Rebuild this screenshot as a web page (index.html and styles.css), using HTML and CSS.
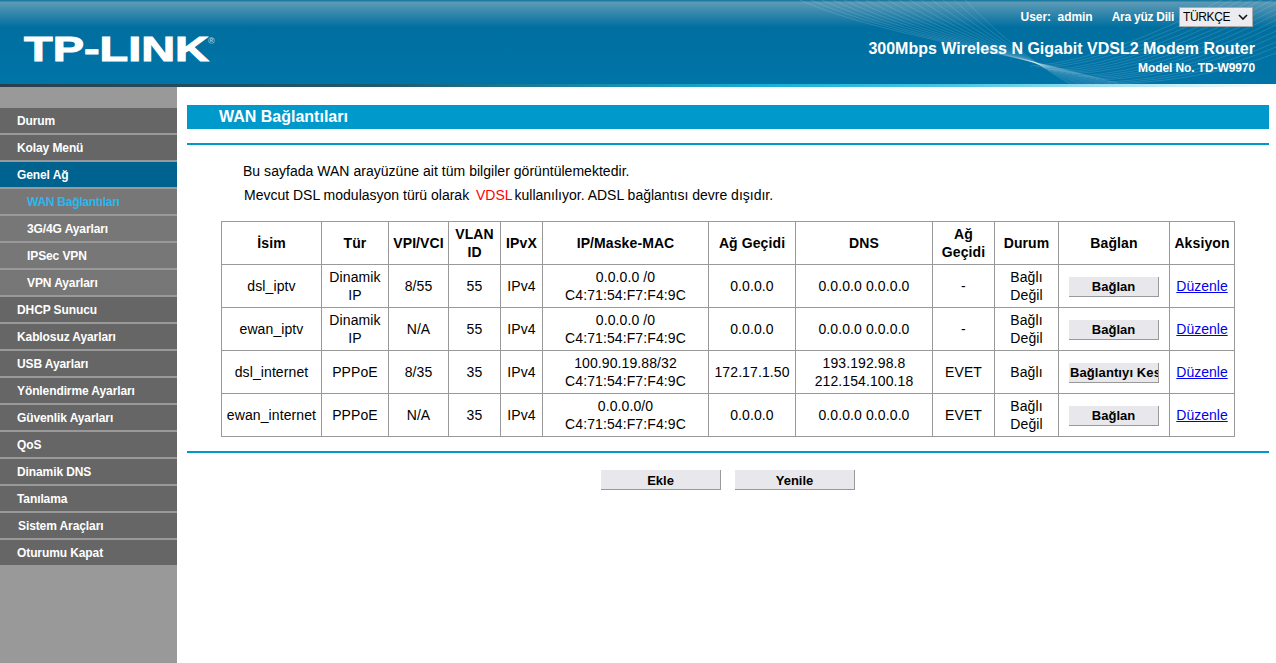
FILE: index.html
```html
<!DOCTYPE html>
<html lang="tr">
<head>
<meta charset="utf-8">
<title>TP-LINK TD-W9970</title>
<link rel="stylesheet" href="styles.css">
</head>
<body>
<header class="top">
  <svg class="waves" viewBox="0 0 496 84" width="496" height="84" aria-hidden="true">
    <path class="wave" d="M20 0C100 35 200 45 340 84M31 0C107 34 203 46 337 84M42 0C115 34 205 46 333 84M53 0C122 33 208 47 330 84M64 0C129 32 211 48 327 84M75 0C137 32 213 48 323 84M86 0C144 31 216 49 320 84M97 0C151 30 219 50 317 84M108 0C159 30 221 50 313 84M119 0C166 29 224 51 310 84M130 0C173 28 227 52 307 84M141 0C181 28 229 52 303 84M152 0C188 27 232 53 300 84M163 0C195 26 235 54 297 84M174 0C203 26 237 54 293 84M185 0C210 25 240 55 290 84"/>
    <path class="wave" d="M250 66Q340 61 496 -30M256 67Q346 62 496 -24M262 68Q352 63 496 -19M268 70Q358 65 496 -13M274 71Q364 66 496 -8M280 72Q370 67 496 -2M286 73Q376 68 496 3M292 74Q382 69 496 9M298 76Q388 71 496 14M304 77Q394 72 496 20M310 78Q400 73 496 25M316 79Q406 74 496 31M322 80Q412 75 496 36M328 82Q418 77 496 42M334 83Q424 78 496 47M340 84Q430 79 496 53"/>
  </svg>
  <svg class="logo" viewBox="0 0 200 34" width="200" height="34" role="img" aria-label="TP-LINK">
    <text class="logo-word" x="0" y="28" textLength="185" lengthAdjust="spacingAndGlyphs">TP-LINK</text>
    <text class="logo-reg" x="184" y="11">®</text>
  </svg>
  <div class="top-right">
    <div class="top-user">
      <span class="user">User:&nbsp; admin</span>
      <span class="lang-label">Ara yüz Dili</span>
      <span class="lang-wrap">
        <select class="lang"><option>TÜRKÇE</option></select>
        <svg class="chev" viewBox="0 0 10 6" width="10" height="6" aria-hidden="true"><path d="M1 1l4 4 4-4"/></svg>
      </span>
    </div>
    <div class="product">300Mbps Wireless N Gigabit VDSL2 Modem Router</div>
    <div class="model">Model No. TD-W9970</div>
  </div>
</header>
<div class="stripe"></div>
<div class="layout">
  <nav class="side">
    <a class="item">Durum</a>
    <a class="item">Kolay Menü</a>
    <a class="item active">Genel Ağ</a>
    <a class="item sub current">WAN Bağlantıları</a>
    <a class="item sub">3G/4G Ayarları</a>
    <a class="item sub">IPSec VPN</a>
    <a class="item sub">VPN Ayarları</a>
    <a class="item">DHCP Sunucu</a>
    <a class="item">Kablosuz Ayarları</a>
    <a class="item">USB Ayarları</a>
    <a class="item">Yönlendirme Ayarları</a>
    <a class="item">Güvenlik Ayarları</a>
    <a class="item">QoS</a>
    <a class="item">Dinamik DNS</a>
    <a class="item">Tanılama</a>
    <a class="item nudge">Sistem Araçları</a>
    <a class="item">Oturumu Kapat</a>
  </nav>
  <main class="main">
    <h1 class="title">WAN Bağlantıları</h1>
    <div class="rule"></div>
    <p class="intro">Bu sayfada WAN arayüzüne ait tüm bilgiler görüntülemektedir.</p>
    <p class="intro second">Mevcut DSL modulasyon türü olarak <span class="red">VDSL</span> kullanılıyor. ADSL bağlantısı devre dışıdır.</p>
    <table class="wan">
      <colgroup>
        <col class="c1"><col class="c2"><col class="c3"><col class="c4"><col class="c5"><col class="c6"><col class="c7"><col class="c8"><col class="c9"><col class="c10"><col class="c11"><col class="c12">
      </colgroup>
      <thead>
        <tr><th>İsim</th><th>Tür</th><th>VPI/VCI</th><th>VLAN ID</th><th>IPvX</th><th>IP/Maske-MAC</th><th>Ağ Geçidi</th><th>DNS</th><th>Ağ Geçidi</th><th>Durum</th><th>Bağlan</th><th>Aksiyon</th></tr>
      </thead>
      <tbody>
        <tr><td>dsl_iptv</td><td>Dinamik IP</td><td>8/55</td><td>55</td><td>IPv4</td><td>0.0.0.0 /0<br>C4:71:54:F7:F4:9C</td><td>0.0.0.0</td><td>0.0.0.0 0.0.0.0</td><td>-</td><td>Bağlı Değil</td><td><button class="btn small">Bağlan</button></td><td><a class="edit" href="#">Düzenle</a></td></tr>
        <tr><td>ewan_iptv</td><td>Dinamik IP</td><td>N/A</td><td>55</td><td>IPv4</td><td>0.0.0.0 /0<br>C4:71:54:F7:F4:9C</td><td>0.0.0.0</td><td>0.0.0.0 0.0.0.0</td><td>-</td><td>Bağlı Değil</td><td><button class="btn small">Bağlan</button></td><td><a class="edit" href="#">Düzenle</a></td></tr>
        <tr><td>dsl_internet</td><td>PPPoE</td><td>8/35</td><td>35</td><td>IPv4</td><td>100.90.19.88/32<br>C4:71:54:F7:F4:9C</td><td>172.17.1.50</td><td>193.192.98.8<br>212.154.100.18</td><td>EVET</td><td>Bağlı</td><td><button class="btn small clip">Bağlantıyı Kes</button></td><td><a class="edit" href="#">Düzenle</a></td></tr>
        <tr><td>ewan_internet</td><td>PPPoE</td><td>N/A</td><td>35</td><td>IPv4</td><td>0.0.0.0/0<br>C4:71:54:F7:F4:9C</td><td>0.0.0.0</td><td>0.0.0.0 0.0.0.0</td><td>EVET</td><td>Bağlı Değil</td><td><button class="btn small">Bağlan</button></td><td><a class="edit" href="#">Düzenle</a></td></tr>
      </tbody>
    </table>
    <div class="rule lower"></div>
    <div class="actions">
      <button class="btn wide">Ekle</button>
      <button class="btn wide">Yenile</button>
    </div>
  </main>
</div>
</body>
</html>
```

FILE: styles.css
```css
* { box-sizing: border-box; }
html, body { margin: 0; height: 100%; overflow: hidden; }
body { font-family: "Liberation Sans", Arial, sans-serif; font-size: 14px; color: #000; background: #fff; }

.top {
  position: relative;
  height: 84px;
  display: flex;
  justify-content: space-between;
  color: #fff;
  background: linear-gradient(to bottom, #1c7ba3 0, #1c7ba3 1px, #5d9ab6 2px, #006f9f 27px, #0074a8 84px);
}
.waves { position: absolute; right: 0; top: 0; }
.wave { fill: none; stroke: #fff; stroke-opacity: .22; stroke-width: .6; }
.logo { position: relative; margin: 33px 0 0 24px; overflow: visible; }
.logo-word { font-family: "Liberation Sans", Arial, sans-serif; font-weight: 700; font-size: 35px; fill: #fff; stroke: #fff; stroke-width: 1; }
.logo-reg { font-family: "Liberation Sans", Arial, sans-serif; font-size: 9px; font-weight: 700; fill: #a5cbdc; }
.top-right { position: relative; display: flex; flex-direction: column; align-items: flex-end; padding: 7px 21px 0 0; font-weight: 700; }
.top-user { display: flex; align-items: center; font-size: 12px; height: 20px; margin-right: 2px; }
.user { letter-spacing: -.05px; }
.lang-label { margin: 0 5px 0 19px; letter-spacing: -.25px; }
.lang-wrap { position: relative; display: block; width: 74px; height: 20px; }
.lang { display: block; width: 74px; height: 20px; font: 400 12px "Liberation Sans", Arial, sans-serif; letter-spacing: -.35px; background: #ecebf0; color: #000; border: 1px solid #aaa; padding: 0 0 0 3px; border-radius: 0; appearance: none; -webkit-appearance: none; }
.chev { position: absolute; right: 5px; top: 7px; pointer-events: none; }
.chev path { fill: none; stroke: #111; stroke-width: 1.6; }
.product { font-size: 16px; line-height: 20px; margin-top: 12px; }
.model { font-size: 12px; line-height: 14px; margin-top: 2px; letter-spacing: -.1px; }

.stripe { height: 3px; background: linear-gradient(to right, #2b3f4b 0, #1f5a6e 30%, #15b0d6 60%, #4cc6e2 75%, #fff 100%); }

.layout { display: flex; height: 576px; }
.side { width: 177px; flex: none; padding-top: 21px; background: #999; display: flex; flex-direction: column; gap: 2px; }
.item { display: block; height: 25px; line-height: 27px; padding-left: 17px; font-size: 12px; font-weight: 700; color: #fff; background: #666; letter-spacing: -.1px; }
.item.nudge { padding-left: 18px; }
.item.active { background: #00628f; }
.item.sub { padding-left: 27px; background: #777; }
.item.current { color: #2bb8ee; letter-spacing: -.25px; }

.main { flex: 1; padding: 18px 7px 0 10px; min-width: 0; }
.title { margin: 0; height: 24px; line-height: 24px; padding-left: 32px; background: #0099cc; color: #fff; font-size: 16px; font-weight: 700; }
.rule { height: 2px; margin-top: 14px; background: #0099cc; }
.intro { margin: 18px 0 0 56px; line-height: 17px; letter-spacing: .03px; }
.intro.second { margin-top: 7px; margin-left: 57px; letter-spacing: 0; }
.red { color: #f00; margin: 0 -2px 0 3px; }

.wan { border-collapse: collapse; table-layout: fixed; width: 1013px; margin: 17px 0 0 34px; }
.wan th, .wan td { border: 1px solid #999; padding: 0; text-align: center; vertical-align: middle; line-height: 18px; height: 43px; overflow: hidden; letter-spacing: .1px; }
.wan th { font-weight: 700; }
.c1 { width: 100px; } .c2 { width: 67px; } .c3 { width: 60px; } .c4 { width: 52px; }
.c5 { width: 42px; } .c6 { width: 166px; } .c7 { width: 87px; } .c8 { width: 137px; }
.c9 { width: 62px; } .c10 { width: 64px; } .c11 { width: 111px; } .c12 { width: 65px; }
.edit { color: #00e; text-decoration: underline; letter-spacing: 0; }

.btn { display: block; padding: 1px 0 0; font: 700 13px "Liberation Sans", Arial, sans-serif; color: #000; background: #e8e8ec; border: 0; border-right: 1px solid #999; border-bottom: 1px solid #999; height: 20px; white-space: nowrap; overflow: hidden; }
.btn.small { width: 90px; margin: 2px auto 0; padding-top: 0; }
.btn.clip { padding-left: 1px; letter-spacing: .1px; text-align: left; }
.btn.wide { width: 120px; }
.rule.lower { margin-top: 14px; }
.actions { display: flex; justify-content: center; gap: 14px; margin-top: 17px; }
```
